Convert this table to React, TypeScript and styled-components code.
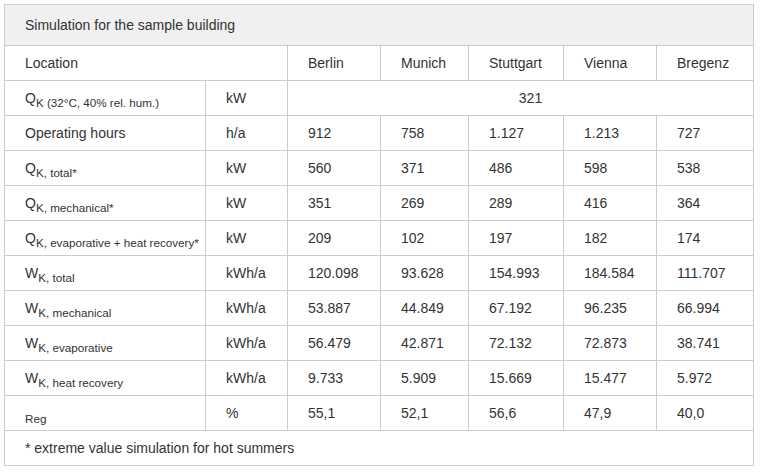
import React from "react";
import styled, { createGlobalStyle } from "styled-components";

const Global = createGlobalStyle`
  html, body { margin: 0; padding: 0; background: #ffffff; }
  body { padding: 4px; font-family: "Liberation Sans", Arial, sans-serif; }
`;

const Table = styled.table`
  border-collapse: collapse;
  table-layout: fixed;
  width: 750px;
  font-family: "Liberation Sans", Arial, sans-serif;
  font-size: 14px;
  color: #333333;
`;

const Cell = styled.td<{ $center?: boolean; $head?: boolean }>`
  border: 1px solid #cccccc;
  padding: 0 0 0 20px;
  height: ${(p) => (p.$head ? 40 : 34)}px;
  line-height: 16px;
  vertical-align: middle;
  text-align: ${(p) => (p.$center ? "center" : "left")};
  background: ${(p) => (p.$head ? "#f0f0f0" : "#ffffff")};
  white-space: nowrap;
`;

const Sub = styled.span`
  font-size: 11.67px;
  position: relative;
  top: 4px;
`;

const Small = styled.span`
  font-size: 11.67px;
  position: relative;
  top: 5px;
`;

type Row = { label: React.ReactNode; unit: React.ReactNode; values: string[] };

const sym = (s: string, sub: string) => (
  <>
    {s}
    <Sub>{sub}</Sub>
  </>
);

const rows: Row[] = [
  { label: "Operating hours", unit: "h/a", values: ["912", "758", "1.127", "1.213", "727"] },
  { label: sym("Q", "K, total*"), unit: "kW", values: ["560", "371", "486", "598", "538"] },
  { label: sym("Q", "K, mechanical*"), unit: "kW", values: ["351", "269", "289", "416", "364"] },
  { label: sym("Q", "K, evaporative + heat recovery*"), unit: "kW", values: ["209", "102", "197", "182", "174"] },
  { label: sym("W", "K, total"), unit: "kWh/a", values: ["120.098", "93.628", "154.993", "184.584", "111.707"] },
  { label: sym("W", "K, mechanical"), unit: "kWh/a", values: ["53.887", "44.849", "67.192", "96.235", "66.994"] },
  { label: sym("W", "K, evaporative"), unit: "kWh/a", values: ["56.479", "42.871", "72.132", "72.873", "38.741"] },
  { label: sym("W", "K, heat recovery"), unit: "kWh/a", values: ["9.733", "5.909", "15.669", "15.477", "5.972"] },
  { label: <Small>Reg</Small>, unit: "%", values: ["55,1", "52,1", "56,6", "47,9", "40,0"] },
];

const cities = ["Berlin", "Munich", "Stuttgart", "Vienna", "Bregenz"];
const widths = [201, 82, 93, 88, 95, 93, 97];

export default function App() {
  return (
    <>
      <Global />
      <Table>
        <colgroup>
          {widths.map((w, i) => (
            <col key={i} style={{ width: w }} />
          ))}
        </colgroup>
        <tbody>
          <tr>
            <Cell $head colSpan={7}>Simulation for the sample building</Cell>
          </tr>
          <tr>
            <Cell colSpan={2}>Location</Cell>
            {cities.map((c) => (
              <Cell key={c}>{c}</Cell>
            ))}
          </tr>
          <tr>
            <Cell>{sym("Q", "K (32°C, 40% rel. hum.)")}</Cell>
            <Cell>kW</Cell>
            <Cell colSpan={5} $center>321</Cell>
          </tr>
          {rows.map((r, i) => (
            <tr key={i}>
              <Cell>{r.label}</Cell>
              <Cell>{r.unit}</Cell>
              {r.values.map((v, j) => (
                <Cell key={j}>{v}</Cell>
              ))}
            </tr>
          ))}
          <tr>
            <Cell colSpan={7}>* extreme value simulation for hot summers</Cell>
          </tr>
        </tbody>
      </Table>
    </>
  );
}
